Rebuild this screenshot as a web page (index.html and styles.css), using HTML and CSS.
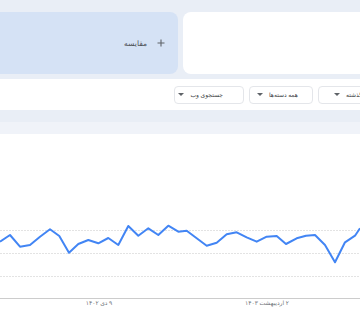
FILE: index.html
```html
<!DOCTYPE html>
<html lang="fa">
<head>
    <meta charset="UTF-8">
    <meta name="viewport" content="width=device-width, initial-scale=1.0">
    <title>روند جستجو</title>
    <link rel="stylesheet" href="styles.css">
</head>
<body>
    <!-- کارت‌های مقایسه -->
    <div class="compare-row">
        <div class="compare-card">
            <span class="plus">
                <svg width="8" height="8" viewBox="0 0 8 8"><path d="M4 0.5v7M0.5 4h7" stroke="#5f6368" stroke-width="1.1" fill="none"/></svg>
            </span>
            <span class="compare-label">مقایسه</span>
        </div>
        <div class="term-card"></div>
    </div>

    <!-- فیلترها -->
    <div class="filter-bar">
        <button class="filter-button btn-web"><span>جستجوی وب</span><i class="arrow"></i></button>
        <button class="filter-button btn-cat"><span>همه دسته‌ها</span><i class="arrow"></i></button>
        <button class="filter-button btn-time"><span>۱۲ ماه گذشته</span><i class="arrow"></i></button>
    </div>

    <div class="gap-band"></div>
    <div class="head-band"></div>

    <!-- نمودار -->
    <div class="chart-card">
        <svg class="chart" width="360" height="186" viewBox="0 0 360 186">
            <g stroke="#e3e3e3" stroke-width="1" stroke-dasharray="2 1">
                <line x1="0" y1="96.5" x2="360" y2="96.5"/>
                <line x1="0" y1="119.5" x2="360" y2="119.5"/>
                <line x1="0" y1="142.5" x2="360" y2="142.5"/>
            </g>
            <line x1="0" y1="164.5" x2="360" y2="164.5" stroke="#cccccc" stroke-width="1"/>
            <polyline fill="none" stroke="#4285f4" stroke-width="2" stroke-linejoin="round"
                points="0,107.7 10,101 20,112.7 30,111 40,102.7 50,95.3 59.3,102 69,118.7 78.3,110 88.3,106 98.3,109.3 108.3,104 118.3,111 128.3,92 138.3,101.7 148.3,94.3 158.3,101 168.3,91.7 178.3,97.7 186.7,96.7 196.7,104.3 206.7,111.7 216.7,108.7 226.7,100.3 236.7,98.3 246.7,103.3 256.7,107.7 266.7,102.7 276.7,102 286,110 296.7,104.3 306,101.7 315,101 325,111 335,128.3 345,108.3 355,101.7 360,94.3"/>
            <text class="tick" x="99" y="171" text-anchor="middle">۹ دی ۱۴۰۲</text>
            <text class="tick" x="267" y="171" text-anchor="middle">۲ اردیبهشت ۱۴۰۳</text>
        </svg>
    </div>
</body>
</html>
```

FILE: styles.css
```css
body {
    margin: 0;
    width: 360px;
    height: 320px;
    overflow: hidden;
    background-color: #e9eef6; /* fondo azul grisáceo */
    font-family: Roboto, "DejaVu Sans", sans-serif;
    color: #3c4043;
}
.compare-row {
    display: flex;
    gap: 5px;
    padding-top: 12px;
    height: 62px;
}
.compare-card {
    flex: 0 0 178px;
    background-color: #d5e2f5;
    border-radius: 0 8px 8px 0;
    display: flex;
    flex-direction: row-reverse;
    align-items: center;
    gap: 10px;
    padding-right: 13px;
    box-sizing: border-box;
}
.compare-label {
    font-size: 7.5px;
    direction: rtl;
    color: #4a4e52;
}
.plus {
    display: flex;
}
.term-card {
    flex: 0 0 200px;
    background-color: #fff;
    border-radius: 8px 0 0 8px;
}
.filter-bar {
    margin-top: 5px;
    height: 31px;
    background-color: #fff;
    display: flex;
    align-items: center;
    gap: 5px;
    padding-left: 174px;
    white-space: nowrap;
}
.filter-button {
    height: 18px;
    border: 1px solid #e4e6ea;
    border-radius: 4px;
    background-color: #fff;
    direction: rtl;
    display: flex;
    align-items: center;
    gap: 6px;
    padding: 0;
    font-family: inherit;
    font-size: 6px;
    color: #3c4043;
    flex: 0 0 auto;
}
.btn-web {
    width: 70px;
    padding-right: 20px;
}
.btn-cat {
    width: 64px;
    padding-right: 14px;
}
.btn-time {
    width: 90px;
    justify-content: flex-end; /* en rtl queda a la izquierda */
    padding-left: 15px;
}
.arrow {
    width: 0;
    height: 0;
    border-left: 3px solid transparent;
    border-right: 3px solid transparent;
    border-top: 3.5px solid #5f6368;
}
.gap-band {
    height: 12px;
}
.head-band {
    height: 12px;
    background-color: #f0f3f9;
}
.chart-card {
    background-color: #fff;
    height: 186px;
}
.chart {
    display: block;
}
.tick {
    font-size: 6px;
    fill: #70757a;
    direction: rtl;
}
```
